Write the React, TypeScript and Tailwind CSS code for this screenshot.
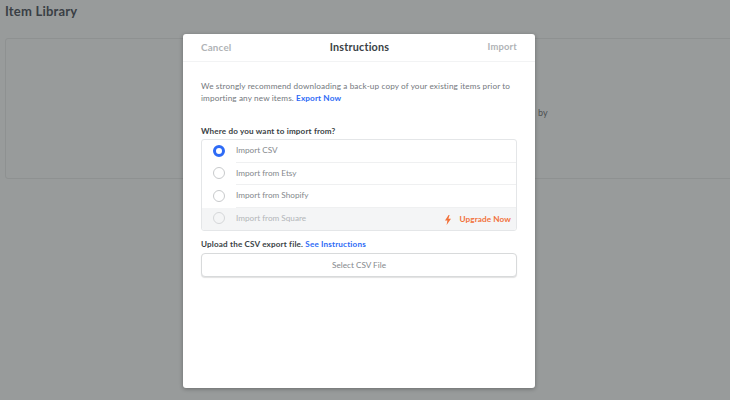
const options = [
  { label: "Import CSV", selected: true },
  { label: "Import from Etsy" },
  { label: "Import from Shopify" },
];

const Radio = ({ selected, dim }: { selected?: boolean; dim?: boolean }) =>
  selected ? (
    <span className="w-[12px] h-[12px] rounded-full border-[3.5px] border-[#2e6bf6] bg-white shrink-0" />
  ) : (
    <span className={`w-[12px] h-[12px] rounded-full border shrink-0 ${dim ? "border-[#d5d7d9]" : "border-[#c8cacc]"}`} />
  );

export default function App() {
  return (
    <div className="relative w-[730px] h-[400px] overflow-hidden bg-[#989b9b] font-['Lato',sans-serif]">
      <h1 className="pl-[5px] pt-[3px] text-[13px] leading-[17px] font-bold tracking-[0.2px] text-[#3a3f45]">Item Library</h1>
      <div className="mt-[18px] ml-[5px] w-[740px] h-[141px] rounded-[3px] border border-[#8e9191] flex items-center pl-[532px]">
        <span className="text-[9px] text-[#4c5052] mt-[8px]">by</span>
      </div>

      <div className="absolute left-[183px] top-[34px] w-[352px] h-[354px] bg-white rounded-[3px] shadow-[0_1px_4px_rgba(0,0,0,0.3)]">
        <div className="h-[28px] px-[18px] flex items-center justify-between border-b border-[#f2f3f4]">
          <span className="text-[9.8px] font-bold tracking-[0.2px] text-[#b0b3b6]">Cancel</span>
          <span className="text-[10.8px] font-bold tracking-[0.2px] text-[#3a3f45]">Instructions</span>
          <span className="text-[9.4px] font-bold tracking-[0.2px] text-[#b0b3b6]">Import</span>
        </div>

        <div className="px-[18px]">
          <p className="mt-[18px] text-[8.2px] leading-[12px] tracking-[0.12px] text-[#74787d]">
            We strongly recommend downloading a back-up copy of your existing items prior to importing any new items.{" "}
            <span className="font-bold text-[#2e6bf6]">Export Now</span>
          </p>

          <div className="mt-[21px] text-[8.1px] leading-[12px] font-bold tracking-[0.16px] text-[#3a3f45]">Where do you want to import from?</div>

          <div className="mt-[2px] h-[91.5px] rounded-[3px] border border-[#e4e6e8] flex flex-col overflow-hidden">
            {options.map((o) => (
              <div key={o.label} className="h-[22.5px] pl-[11px] flex items-center gap-[11px]">
                <span className="flex mb-[1px]"><Radio selected={o.selected} /></span>
                <span className="flex-1 h-full pb-[1px] flex items-center border-b border-[#eff0f1] text-[8.2px] text-[#84888c]">{o.label}</span>
              </div>
            ))}
            <div className="flex-1 pl-[11px] pr-[5px] flex items-center gap-[11px] bg-[#f4f5f6]">
              <span className="flex mb-[1px]"><Radio dim /></span>
              <span className="flex-1 text-[8.2px] pb-[1px] text-[#b3b6b9]">Import from Square</span>
              <svg width="8" height="10" viewBox="0 0 8 10" className="mt-[2px]">
                <path d="M4.6 0 L1 5.6 H3.4 L2.6 10 L7 3.8 H4.4 L5.6 0 Z" fill="#f2713a" />
              </svg>
              <span className="text-[8.2px] font-bold tracking-[0.1px] text-[#f2713a] mt-[2px] ml-[-4px]">Upgrade Now</span>
            </div>
          </div>

          <div className="mt-[7px] text-[8.1px] leading-[12px] font-bold tracking-[0.17px] text-[#3a3f45]">
            Upload the CSV export file. <span className="text-[#2e6bf6]">See Instructions</span>
          </div>

          <button className="w-full h-[24px] rounded-[4px] border-[1.5px] border-[#d8dadb] shadow-[0_1px_1px_rgba(0,0,0,0.12)] bg-white text-[8.2px] text-[#84888c]">
            Select CSV File
          </button>
        </div>
      </div>
    </div>
  );
}
